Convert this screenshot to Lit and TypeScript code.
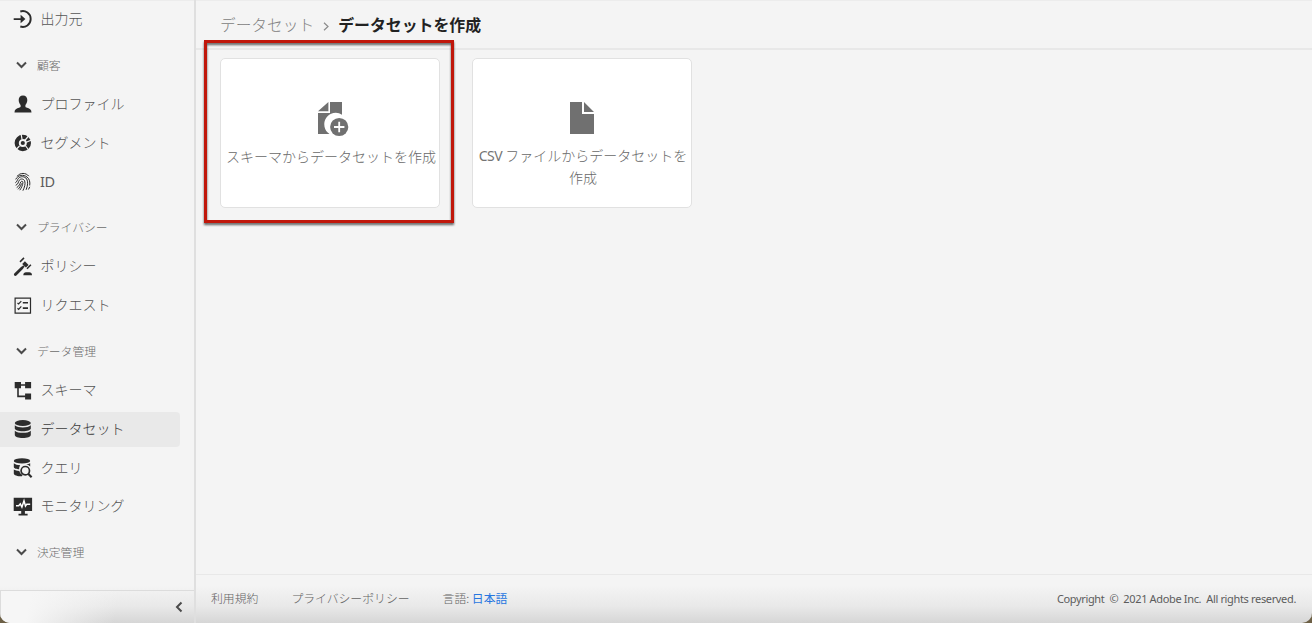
import { LitElement, html, svg, css, nothing } from "lit";
import { customElement, property } from "lit/decorators.js";

const icons: Record<string, unknown> = {
  source: svg`<path d="M6.300 1.500A7.900 7.900 0 1 1 6.300 16.500" fill="none" stroke="currentColor" stroke-width="1.900"/><path d="M-.3 8.200h6.900V4.800l4.800 4.200-4.800 4.200V9.900H-.3z"/>`,
  profile: svg`<path d="M9 .4c2.800 0 4.300 2 4.300 4.700 0 2-.8 3.900-1.900 5v1.300c0 .6.400.8 1 1 3.300.9 5.100 2 5.100 5H.500c0-3 1.800-4.100 5.100-5 .6-.2 1-.4 1-1v-1.300C5.500 9 4.700 7.100 4.700 5.100 4.700 2.400 6.200.4 9 .4z"/>`,
  segment: svg`<circle cx="8.800" cy="9" r="6.100" fill="none" stroke="currentColor" stroke-width="4.200"/><path d="M7.200.3L8 5.200M8.800 9L15.400 1M10 9.200L17.500 6M11.300 11.500l3.800 5M5.500 12L2 15.500" stroke="#f4f4f4" stroke-width="1.200" fill="none"/><circle cx="8.800" cy="9" r="2.100"/>`,
  id: svg`<g fill="none" stroke="currentColor" stroke-width="1"><path d="M3.200 3.200C6-.5 12-.5 14.800 3.200M1.700 6.400C4 1.700 9.500 1.300 13 4c2.600 2 3.200 5 2.700 8.500M1.300 9.800c2-1 1.700-2.800 3-4.300C6.500 3 10.800 3.100 12.700 6c1.500 2.500 1.100 6.800-.6 10.800M1.700 12.300C4.700 11 4 9 5.300 7.200c1.500-1.900 4.500-1.500 5.400.8 1 2.800-.3 6.500-1.800 9.700M2.700 14.600C5.500 13 5.800 10.800 6.700 9c.6-1.100 2.200-.9 2.200.4 0 2.400-1.500 5.500-3.100 7.800M4 16.300c1.700-1.500 2.700-3.400 3.500-5.800M15.800 13.800l-1.400 2.700"/></g>`,
  policy: svg`<path d="M.3 15.600L7.500 8.500l1.900 1.900-7 7.200c-1.400 1.200-3.400-.6-2.100-2z"/><path d="M8.200 5.900l2.700-2.700 3.700 3.700-2.700 2.700z"/><path d="M10 8L7.700 10.300" stroke="currentColor" stroke-width="2"/><path d="M6 3.900L10-.1M13 10.700l3.900-4" stroke="currentColor" stroke-width="1.500" fill="none"/><path d="M9.300 17.300c0-2.200 1.200-3 2.700-3h3.300c1.500 0 2.700.8 2.700 3z"/>`,
  request: svg`<path d="M1.100 1.100h15.400v15H1.100z" fill="none" stroke="currentColor" stroke-width="1.200"/><path d="M3.500 6l1.100 1L7.300 4.200M3.500 11.300l1.100 1 2.700-2.900" fill="none" stroke="currentColor" stroke-width="1.200"/><path d="M8.800 4.900h5.200v1.700H8.800zM8.800 10.300h5.200v1.700H8.800z"/>`,
  schema: svg`<path d="M.7 0H7v6.200H.700zM11.100 0h6v6.200h-6zM11.100 11.400h6v6h-6z"/><path d="M6 3h6M4 6v8.400h8" fill="none" stroke="currentColor" stroke-width="1.600"/>`,
  dataset: svg`<ellipse cx="8.800" cy="3" rx="8" ry="3"/><path d="M.8 5.300c1.600 1.600 4.700 2.100 8 2.100s6.400-.5 8-2.100v3.200c0 1.600-3.600 2.700-8 2.700s-8-1.100-8-2.700zM.8 10.700c1.600 1.600 4.700 2.100 8 2.100s6.400-.5 8-2.100v4.200c0 1.700-3.600 3-8 3s-8-1.300-8-3z"/>`,
  query: svg`<ellipse cx="8" cy="1.900" rx="8.200" ry="2.600"/><path d="M-.2 4.300c1.500 1.300 3.600 1.800 6.400 2C5.400 7.400 5 9 5.200 10.300c-2.500-.2-5.400-.8-5.400-2.300zM-.2 10.600c1.300.9 3.300 1.300 5.500 1.500.5 1.800 1.600 3.300 3.300 4l-.7 1.200c-4.400 0-8.100-1.200-8.100-2.900zM16.200 4.200v3.300c-1.200-1.100-2.600-1.800-4-1.900 1.600-.3 3-.8 4-1.400z"/><circle cx="11.300" cy="11.700" r="4.200" fill="none" stroke="currentColor" stroke-width="1.700"/><path d="M14.200 14.700l3.400 3.500" stroke="currentColor" stroke-width="2.200"/>`,
  monitor: svg`<path d="M-.3-.3h18.400v13.400h-7.200v2.700h2.700v1.700H4.500v-1.700h2.700v-2.700H-.3z"/><path d="M2 7.700h2.700l1.600-1.900L7.900 9 10 2.800l1.500 5.300 1.300-1.900h3.400" fill="none" stroke="#fff" stroke-width="1.500"/>`,
};

type Entry = { label: string; icon?: string; selected?: boolean };

const entries: Entry[] = [
  { label: "出力元", icon: "source" },
  { label: "顧客" },
  { label: "プロファイル", icon: "profile" },
  { label: "セグメント", icon: "segment" },
  { label: "ID", icon: "id" },
  { label: "プライバシー" },
  { label: "ポリシー", icon: "policy" },
  { label: "リクエスト", icon: "request" },
  { label: "データ管理" },
  { label: "スキーマ", icon: "schema" },
  { label: "データセット", icon: "dataset", selected: true },
  { label: "クエリ", icon: "query" },
  { label: "モニタリング", icon: "monitor" },
  { label: "決定管理" },
];

@customElement("side-nav")
class SideNav extends LitElement {
  static styles = css`
    :host { display: flex; flex-direction: column; box-sizing: border-box; width: 196px; border-right: 2px solid #dfdfdf; }
    .list { flex: 1; min-height: 0; display: flex; flex-direction: column; }
    .item { height: 34.750px; margin: 2px 14px 2px 0; padding-left: 14px; display: flex; align-items: center; gap: 8.500px; border-radius: 0 4px 4px 0; font-size: 14px; color: #545454; flex: none; }
    .text { padding-bottom: 3px; }
    .latin { font-family: "Noto Sans", sans-serif; font-weight: 400; padding-bottom: 1px; font-size: 14.500px; letter-spacing: -.5px; margin-left: -.5px; color: #5c5c5c; }
    .selected { background: #e9e9e9; color: #3c3c3c; }
    .icon { width: 18px; height: 18px; fill: currentColor; color: #2c2c2c; overflow: visible; flex: none; }
    .heading { height: 34.250px; padding: 9px 0 3px 16px; display: flex; align-items: center; gap: 10px; font-size: 11.800px; color: #6c6c6c; flex: none; }
    .caption { padding-bottom: 1px; }
    .chevron { width: 11px; height: 8px; fill: none; stroke: #4b4b4b; stroke-width: 2; flex: none; }
    .bottom { height: 33px; box-sizing: border-box; border-top: 1px solid #dcdcdc; border-left: 1px solid #dcdcdc; display: flex; align-items: center; justify-content: flex-end; padding-right: 11px; background: linear-gradient(100deg, #f6f6f6 15%, #f6f6f600 60%); }
    .back { width: 8px; height: 12px; fill: none; stroke: #4b4b4b; stroke-width: 2; }
  `;
  render() {
    return html`
      <nav class="list">
        ${entries.map((e) =>
          e.icon
            ? html`<div class="item ${e.selected ? "selected" : ""}"><svg class="icon" viewBox="0 0 18 18">${icons[e.icon]}</svg><span class="text ${e.label === "ID" ? "latin" : ""}">${e.label}</span></div>`
            : html`<div class="heading"><svg class="chevron" viewBox="0 0 11 8"><path d="M1 1.500l4.500 4.500L10 1.500"/></svg><span class="caption">${e.label}</span></div>`
        )}
      </nav>
      <div class="bottom"><svg class="back" viewBox="0 0 8 12"><path d="M6.500 1.500L2 6l4.500 4.500"/></svg></div>
    `;
  }
}

@customElement("option-card")
class OptionCard extends LitElement {
  @property() label = "";
  @property() prefix = "";
  @property({ type: Boolean }) add = false;
  @property({ type: Boolean }) marked = false;
  static styles = css`
    :host { display: block; position: relative; }
    .card { width: 220px; height: 150px; box-sizing: border-box; border: 1px solid #e1e1e1; border-radius: 5px; background: #fff; padding: 42px 2px 0; text-align: center; font-size: 14px; line-height: 22px; color: #686868; }
    .glyph { display: block; width: 32px; height: 36px; margin: 0 auto 7px; fill: #707070; }
    .add { padding-left: 8px; margin-bottom: 8px; }
    .label { padding: 0 2px 0 3px; margin-right: -1px; }
    .prefix { font-family: "Noto Sans", sans-serif; font-weight: 400; letter-spacing: -.5px; font-size: 14px; line-height: 1; color: #747474; }
    .mark { position: absolute; left: -16px; top: -18px; width: 250px; height: 183px; box-sizing: border-box; border: 3px solid #c0170b; filter: drop-shadow(0 2px 1px #0009); }
  `;
  render() {
    return html`
      <div class="card">
        ${this.add
          ? html`<svg class="glyph add" viewBox="0 0 32 36"><path d="M10.400 1v9.300H0zM12 1h12v12.700A11 11 0 0 0 11.500 33H0V12h12z"/><circle cx="21.200" cy="26" r="9.100"/><path d="M21.200 20.800v10.400M16 26h10.400" stroke="#fff" stroke-width="1.800"/></svg>`
          : html`<svg class="glyph" viewBox="0 0 32 36"><path d="M4 1h12v12h12v20H4zM18 1l10 10H18z"/></svg>`}
        <div class="label">${this.prefix ? html`<span class="prefix">${this.prefix}</span> ` : nothing}${this.label}</div>
      </div>
      ${this.marked ? html`<div class="mark"></div>` : nothing}
    `;
  }
}

@customElement("app-root")
class AppRoot extends LitElement {
  static styles = css`
    :host { display: block; background: #6d6046; font-family: "Noto Sans CJK JP", sans-serif; font-weight: 300; }
    .window { height: 623px; box-sizing: border-box; display: flex; overflow: hidden; border-radius: 0 0 10px 10px; background: linear-gradient(#f4f4f4 585px, #e9e9e9 606px, #d6d6d6 623px); box-shadow: inset 0 1px #ececec; }
    .main { flex: 1; min-width: 0; display: flex; flex-direction: column; }
    .header { height: 50px; box-sizing: border-box; border-bottom: 2px solid #e8e8e8; padding: 0 0 0 24px; display: flex; align-items: center; font-size: 15.700px; color: #808080; }
    .sep { width: 6px; height: 9px; margin: 5px 9px 0 9px; fill: none; stroke: #8b8b8b; stroke-width: 1.200; }
    .current { font-weight: 700; font-size: 15.900px; color: #222; }
    .content { flex: 1; display: flex; gap: 32px; align-items: flex-start; padding: 8px 24px; }
    .footer { height: 49px; box-sizing: border-box; border-top: 1px solid #e8e8e8; padding: 0 16px 4px 15px; display: flex; align-items: center; gap: 33px; font-size: 11.850px; color: #646464; }
    .link { color: #2877e0; font-weight: 400; }
    .copyright { margin-left: auto; padding-top: 3px; font-family: "Noto Sans", sans-serif; font-weight: 400; font-size: 11px; letter-spacing: -.345px; color: #5c5c5c; white-space: pre; }
  `;
  render() {
    return html`
      <div class="window">
        <side-nav></side-nav>
        <div class="main">
          <div class="header"><span>データセット</span><svg class="sep" viewBox="0 0 6 9"><path d="M1 .800l4 3.700-4 3.700"/></svg><span class="current">データセットを作成</span></div>
          <div class="content">
            <option-card add marked label="スキーマからデータセットを作成"></option-card>
            <option-card prefix="CSV" label="ファイルからデータセットを作成"></option-card>
          </div>
          <div class="footer"><span>利用規約</span><span>プライバシーポリシー</span><span>言語: <span class="link">日本語</span></span><span class="copyright">Copyright  ©  2021 Adobe Inc.  All rights reserved.</span></div>
        </div>
      </div>
    `;
  }
}
